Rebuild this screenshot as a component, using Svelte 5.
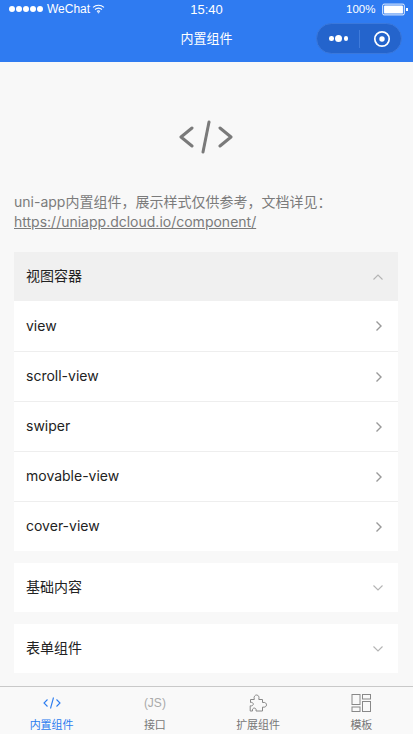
<script lang="ts">
  const items = ['view', 'scroll-view', 'swiper', 'movable-view', 'cover-view'];
  const closed = ['基础内容', '表单组件'];
</script>

<div class="page">
  <header class="top">
    <div class="status">
      <div class="carrier">
        <span class="dots">
          {#each [0, 1, 2, 3, 4] as d}<i></i>{/each}
        </span>
        <span>WeChat</span>
        <svg width="13" height="10" viewBox="0 0 13 10" class="wifi" fill="none" stroke="#fff" stroke-width="1.1">
          <path d="M1 3.400C4.300 .6 8.700 .6 12 3.400" />
          <path d="M3 5.500c2.200-1.800 4.800-1.800 7 0" />
          <path d="M5 7.500c1-.8 2-.8 3 0" />
          <path d="M5.800 8.400l.7.9.7-.9z" fill="#fff" stroke-width=".5" />
        </svg>
      </div>
      <div class="time">15:40</div>
      <div class="battery">
        <span>100%</span>
        <span class="cell"><b></b></span>
        <span class="nub"></span>
      </div>
    </div>
    <div class="nav">
      <div class="title">内置组件</div>
      <div class="capsule">
        <div class="more"><i></i><i class="big"></i><i></i></div>
        <div class="sep"></div>
        <svg class="target" width="20" height="20" viewBox="0 0 20 20">
          <circle cx="10" cy="10" r="7.200" fill="none" stroke="#fff" stroke-width="1.700" />
          <circle cx="10" cy="10" r="2.700" fill="#fff" />
        </svg>
      </div>
    </div>
  </header>

  <main class="content">
    <div class="logo">
      <svg width="54" height="34" viewBox="0 0 54 34" fill="none" stroke="#7a7a7a" stroke-width="3" stroke-linecap="round" stroke-linejoin="round">
        <path d="M13 8L2 17l11 9" />
        <path d="M30 2l-6 30" />
        <path d="M41 8l11 9-11 9" />
      </svg>
    </div>
    <p class="intro">uni-app内置组件，展示样式仅供参考，文档详见：<br /><span class="link">https://uniapp.dcloud.io/component/</span></p>

    <section class="panel">
      <div class="panel-head open">
        <span>视图容器</span>
        <svg width="12" height="8" viewBox="0 0 12 8" fill="none" stroke="#b4b4b4" stroke-width="1.100"><path d="M1.500 6.500L6 2l4.500 4.500" /></svg>
      </div>
      {#each items as item}
        <div class="row">
          <span>{item}</span>
          <svg width="8" height="12" viewBox="0 0 8 12" fill="none" stroke="#999" stroke-width="1.400"><path d="M1.500 1.500L6 6l-4.500 4.500" /></svg>
        </div>
      {/each}
    </section>

    {#each closed as label}
      <section class="panel">
        <div class="panel-head">
          <span>{label}</span>
          <svg width="12" height="8" viewBox="0 0 12 8" fill="none" stroke="#b4b4b4" stroke-width="1.100"><path d="M1.500 1.500L6 6l4.500-4.500" /></svg>
        </div>
      </section>
    {/each}
  </main>

  <footer class="tabs">
    <div class="tab active">
      <svg width="20" height="20" viewBox="0 0 20 20" fill="none" stroke="#2b7cf0" stroke-width="1.100">
        <path d="M5.500 6.500L2 10l3.500 3.500" />
        <path d="M11.500 4.500l-3 11" />
        <path d="M14.500 6.500L18 10l-3.500 3.500" />
      </svg>
      <span>内置组件</span>
    </div>
    <div class="tab">
      <div class="js">(JS)</div>
      <span>接口</span>
    </div>
    <div class="tab">
      <svg width="20" height="20" viewBox="0 0 20 20" fill="none" stroke="#888" stroke-width="1">
        <path d="M2.500 6.500h3.800c-.8-2.800.6-4.500 2.300-4.500s2.900 1.700 2.200 4.500h3.700v3c2.800-.6 4 .9 4 2.400s-1.500 2.700-4 2.200v3.900H8c.5-1.800-.3-2.900-1.700-2.900-1.300 0-2.200 1.100-1.800 2.900H2.200v-5.200c2 .4 3.100-.6 3.100-1.700s-1.200-2.100-2.800-1.600z" />
      </svg>
      <span>扩展组件</span>
    </div>
    <div class="tab">
      <svg width="20" height="20" viewBox="0 0 20 20" fill="none" stroke="#888" stroke-width="1">
        <rect x="1" y="1.500" width="8" height="10" />
        <rect x="1" y="14" width="8" height="4.500" />
        <rect x="11.500" y="1.500" width="8" height="4.500" />
        <rect x="11.500" y="8.500" width="8" height="10" />
      </svg>
      <span>模板</span>
    </div>
  </footer>
</div>

<style>
  :global(body) {
    margin: 0;
    background: #f8f8f8;
  }

  .page {
    width: 413px;
    height: 734px;
    display: flex;
    flex-direction: column;
    overflow: hidden;
    font-family: Inter, "Noto Sans CJK SC", sans-serif;
    background: #f8f8f8;
  }

  .top {
    height: 62px;
    background: #2f7bf1;
    color: #fff;
    flex: none;
  }

  .status {
    height: 18px;
    padding: 0 5px 0 9px;
    display: flex;
    align-items: center;
    justify-content: space-between;
    font-family: "Liberation Sans", sans-serif;
    font-size: 12px;
    margin-bottom: -1px;
  }

  .carrier {
    display: flex;
    align-items: center;
    gap: 4px;
    width: 120px;
  }

  .dots {
    display: flex;
    gap: 1px;
  }

  .dots i {
    width: 6px;
    height: 6px;
    border-radius: 50%;
    background: #fff;
  }

  .wifi {
    margin-left: -2px;
  }

  .time {
    font-size: 13px;
    margin-right: 4px;
  }

  .battery {
    display: flex;
    align-items: center;
    font-size: 11.500px;
    width: 120px;
    justify-content: flex-end;
  }

  .cell {
    margin-left: 6px;
    width: 21px;
    height: 9px;
    border: 1px solid #fff;
    border-radius: 2px;
    padding: 1px;
    box-sizing: content-box;
    display: block;
    transform: scale(.9);
  }

  .cell b {
    display: block;
    height: 100%;
    background: #fff;
    border-radius: 1px;
  }

  .nub {
    width: 1.500px;
    height: 3px;
    background: #fff;
  }

  .nav {
    height: 44px;
    display: flex;
    align-items: center;
    justify-content: center;
    position: relative;
  }

  .title {
    font-size: 13px;
    margin-top: -4px;
  }

  .capsule {
    position: absolute;
    right: 11px;
    top: 6px;
    width: 86px;
    height: 31px;
    border-radius: 16px;
    background: #2464cc;
    border: 1px solid #3a78dc;
    display: flex;
    align-items: center;
    box-sizing: border-box;
    padding-left: 6px;
  }

  .more {
    display: flex;
    align-items: center;
    gap: 1.500px;
    width: 31px;
    justify-content: center;
  }

  .more i {
    width: 4.500px;
    height: 4.500px;
    border-radius: 50%;
    background: #fff;
  }

  .more .big {
    width: 7px;
    height: 7px;
  }

  .sep {
    width: 1px;
    height: 18px;
    background: #3f7bdb;
    margin-left: 5px;
  }

  .target {
    margin-left: 12px;
  }

  .content {
    flex: 1;
    padding: 0 15px 0 14px;
    min-height: 0;
  }

  .logo {
    margin-top: 58px;
    height: 34px;
    display: flex;
    justify-content: center;
  }

  .intro {
    margin: 38px 0 0;
    font-size: 14px;
    line-height: 20px;
    color: #7b7b7b;
    white-space: nowrap;
  }

  .link {
    text-decoration: underline;
  }

  .panel {
    margin-top: 12px;
    background: #fff;
  }

  .intro + .panel {
    margin-top: 20px;
  }

  .panel-head {
    height: 49px;
    padding: 0 14px 0 12px;
    display: flex;
    align-items: center;
    justify-content: space-between;
    font-size: 14px;
    color: #222;
  }

  .panel-head span {
    padding-bottom: 3px;
  }

  .panel-head.open {
    background: #f0f0f0;
  }

  .row {
    height: 50px;
    padding: 0 15px 0 12px;
    display: flex;
    align-items: center;
    justify-content: space-between;
    border-top: 1px solid #eee;
    box-sizing: border-box;
    font-size: 14px;
    color: #222;
  }

  .row span {
    padding-bottom: 2px;
  }

  .row:first-of-type,
  .panel-head + .row {
    border-top: none;
  }

  .tabs {
    height: 47px;
    flex: none;
    display: flex;
    border-top: 1px solid #c9c9c9;
    background: #f9f9f9;
  }

  .tab {
    flex: 1;
    display: flex;
    flex-direction: column;
    align-items: center;
    font-size: 11px;
    color: #777;
    padding-top: 6px;
    gap: 5px;
    line-height: 14px;
  }

  .tab.active {
    color: #2b7cf0;
  }

  .js {
    height: 20px;
    line-height: 20px;
    font-size: 12px;
    color: #aaa;
    font-family: "Liberation Sans", sans-serif;
  }
</style>
